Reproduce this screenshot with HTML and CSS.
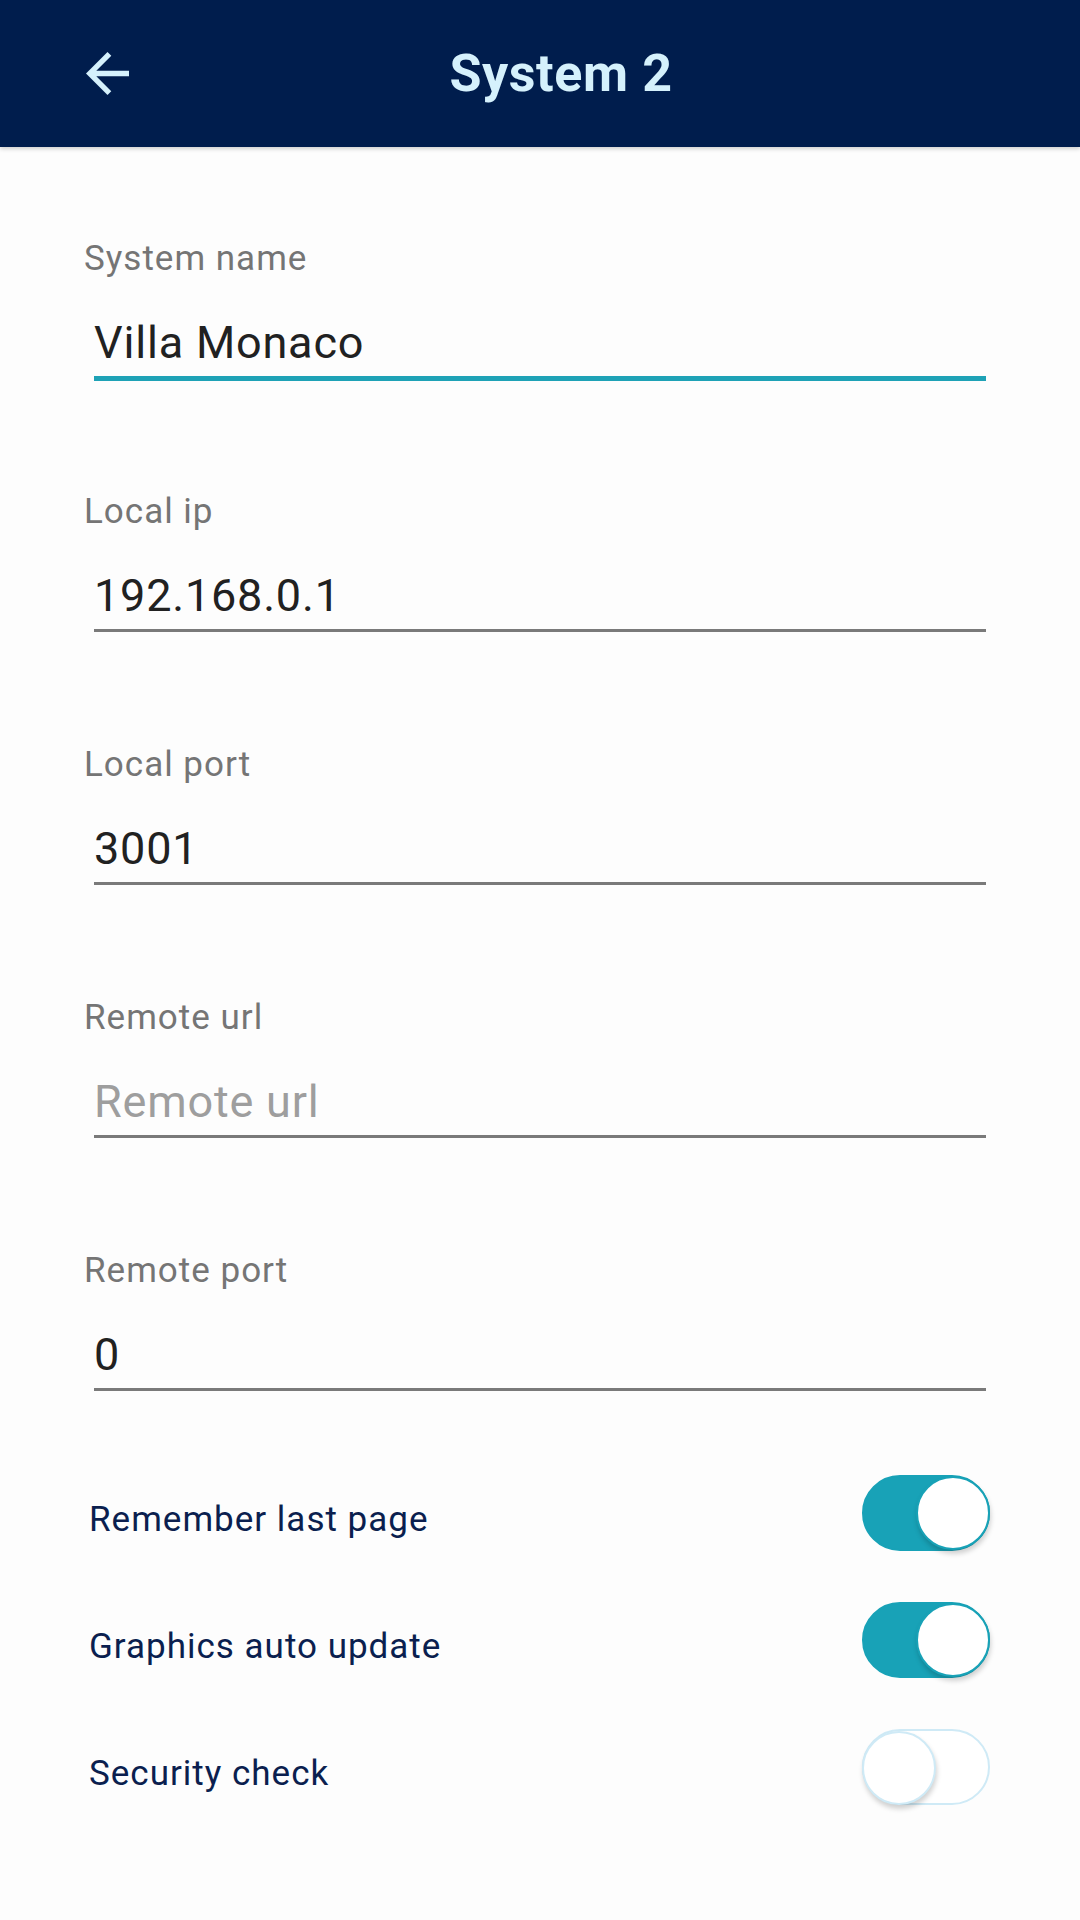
FILE: index.html
```html
<!DOCTYPE html>
<html>
<head>
    <title>System 2</title>
    <link rel="stylesheet" href="styles.css">
</head>
<body>
    <header class="toolbar">
        <button class="back" type="button">
            <svg viewBox="4 4 16 16" width="43" height="43">
                <path d="M20 11H7.83l5.59-5.59L12 4l-8 8 8 8 1.41-1.41L7.83 13H20v-2z" fill="#d5f1fc"/>
            </svg>
        </button>
        <h1 class="title">System 2</h1>
    </header>

    <main class="settings">
        <div class="field">
            <label class="field-label" for="name">System name</label>
            <input class="field-input focused" id="name" type="text" value="Villa Monaco">
        </div>
        <div class="field">
            <label class="field-label" for="ip">Local ip</label>
            <input class="field-input" id="ip" type="text" value="192.168.0.1">
        </div>
        <div class="field">
            <label class="field-label" for="port">Local port</label>
            <input class="field-input" id="port" type="text" value="3001">
        </div>
        <div class="field">
            <label class="field-label" for="url">Remote url</label>
            <input class="field-input" id="url" type="text" placeholder="Remote url">
        </div>
        <div class="field">
            <label class="field-label" for="rport">Remote port</label>
            <input class="field-input" id="rport" type="text" value="0">
        </div>

        <div class="switches">
            <div class="switch-row">
                <span class="switch-label">Remember last page</span>
                <span class="switch on"><span class="knob"></span></span>
            </div>
            <div class="switch-row">
                <span class="switch-label">Graphics auto update</span>
                <span class="switch on"><span class="knob"></span></span>
            </div>
            <div class="switch-row">
                <span class="switch-label">Security check</span>
                <span class="switch"><span class="knob"></span></span>
            </div>
        </div>
    </main>
</body>
</html>
```

FILE: styles.css
```css
body {
    margin: 0;
    background-color: #fdfdfd;
    font-family: Roboto, "Noto Sans", sans-serif;
}

.toolbar {
    height: 147px;
    display: flex;
    align-items: center;
    padding: 0 87px 0 86px;
    background-color: #001d4d;
    box-shadow: 0 2px 4px rgba(0, 0, 0, 0.18);
}

.back {
    display: flex;
    padding: 0;
    border: none;
    background: none;
}

.title {
    flex: 1;
    margin: 0;
    text-align: center;
    color: #d5f1fc;
    font-size: 52px;
    font-weight: 700;
    letter-spacing: 0.6px;
}

.settings {
    padding: 92px 94px 0 84px;
}

.field + .field {
    margin-top: 113px;
}

.field-label {
    display: block;
    font-size: 35px;
    line-height: 40px;
    letter-spacing: 1px;
    color: #757575;
}

.field-input {
    display: block;
    box-sizing: content-box;
    width: calc(100% - 10px);
    height: 54px;
    margin: 36px 0 0 10px;
    padding: 0 0 7px;
    border: none;
    border-bottom: 3px solid #7a7a7a;
    background: transparent;
    font-family: Roboto, sans-serif;
    font-size: 45px;
    letter-spacing: 0.8px;
    color: #212121;
    outline: none;
}

.field-input::placeholder {
    color: #9e9e9e;
}

.field-input.focused {
    border-bottom: 5px solid #1ea2b6;
    margin-bottom: -2px;
}

.switches {
    margin: 58px -4px 0 0;
}

.switch-row {
    height: 127px;
    display: flex;
    align-items: center;
    justify-content: space-between;
    padding-left: 5px;
}

.switch-label {
    margin-top: 14px;
    font-size: 35px;
    line-height: 40px;
    letter-spacing: 1px;
    color: #0b1f4f;
}

.switch {
    position: relative;
    box-sizing: border-box;
    width: 128px;
    height: 76px;
    border: 2px solid #cfeaf6;
    border-radius: 38px;
    background-color: #fff;
}

.switch.on {
    border-color: #18a2b7;
    background-color: #18a2b7;
}

.knob {
    position: absolute;
    top: 0;
    left: -2px;
    box-sizing: border-box;
    width: 74px;
    height: 74px;
    border: 2px solid #cfeaf6;
    border-radius: 50%;
    background-color: #fff;
    box-shadow: 1px 4px 5px rgba(0, 0, 0, 0.18);
}

.switch.on .knob {
    left: auto;
    right: -2px;
    top: -1px;
    border-color: #18a2b7;
}
```
